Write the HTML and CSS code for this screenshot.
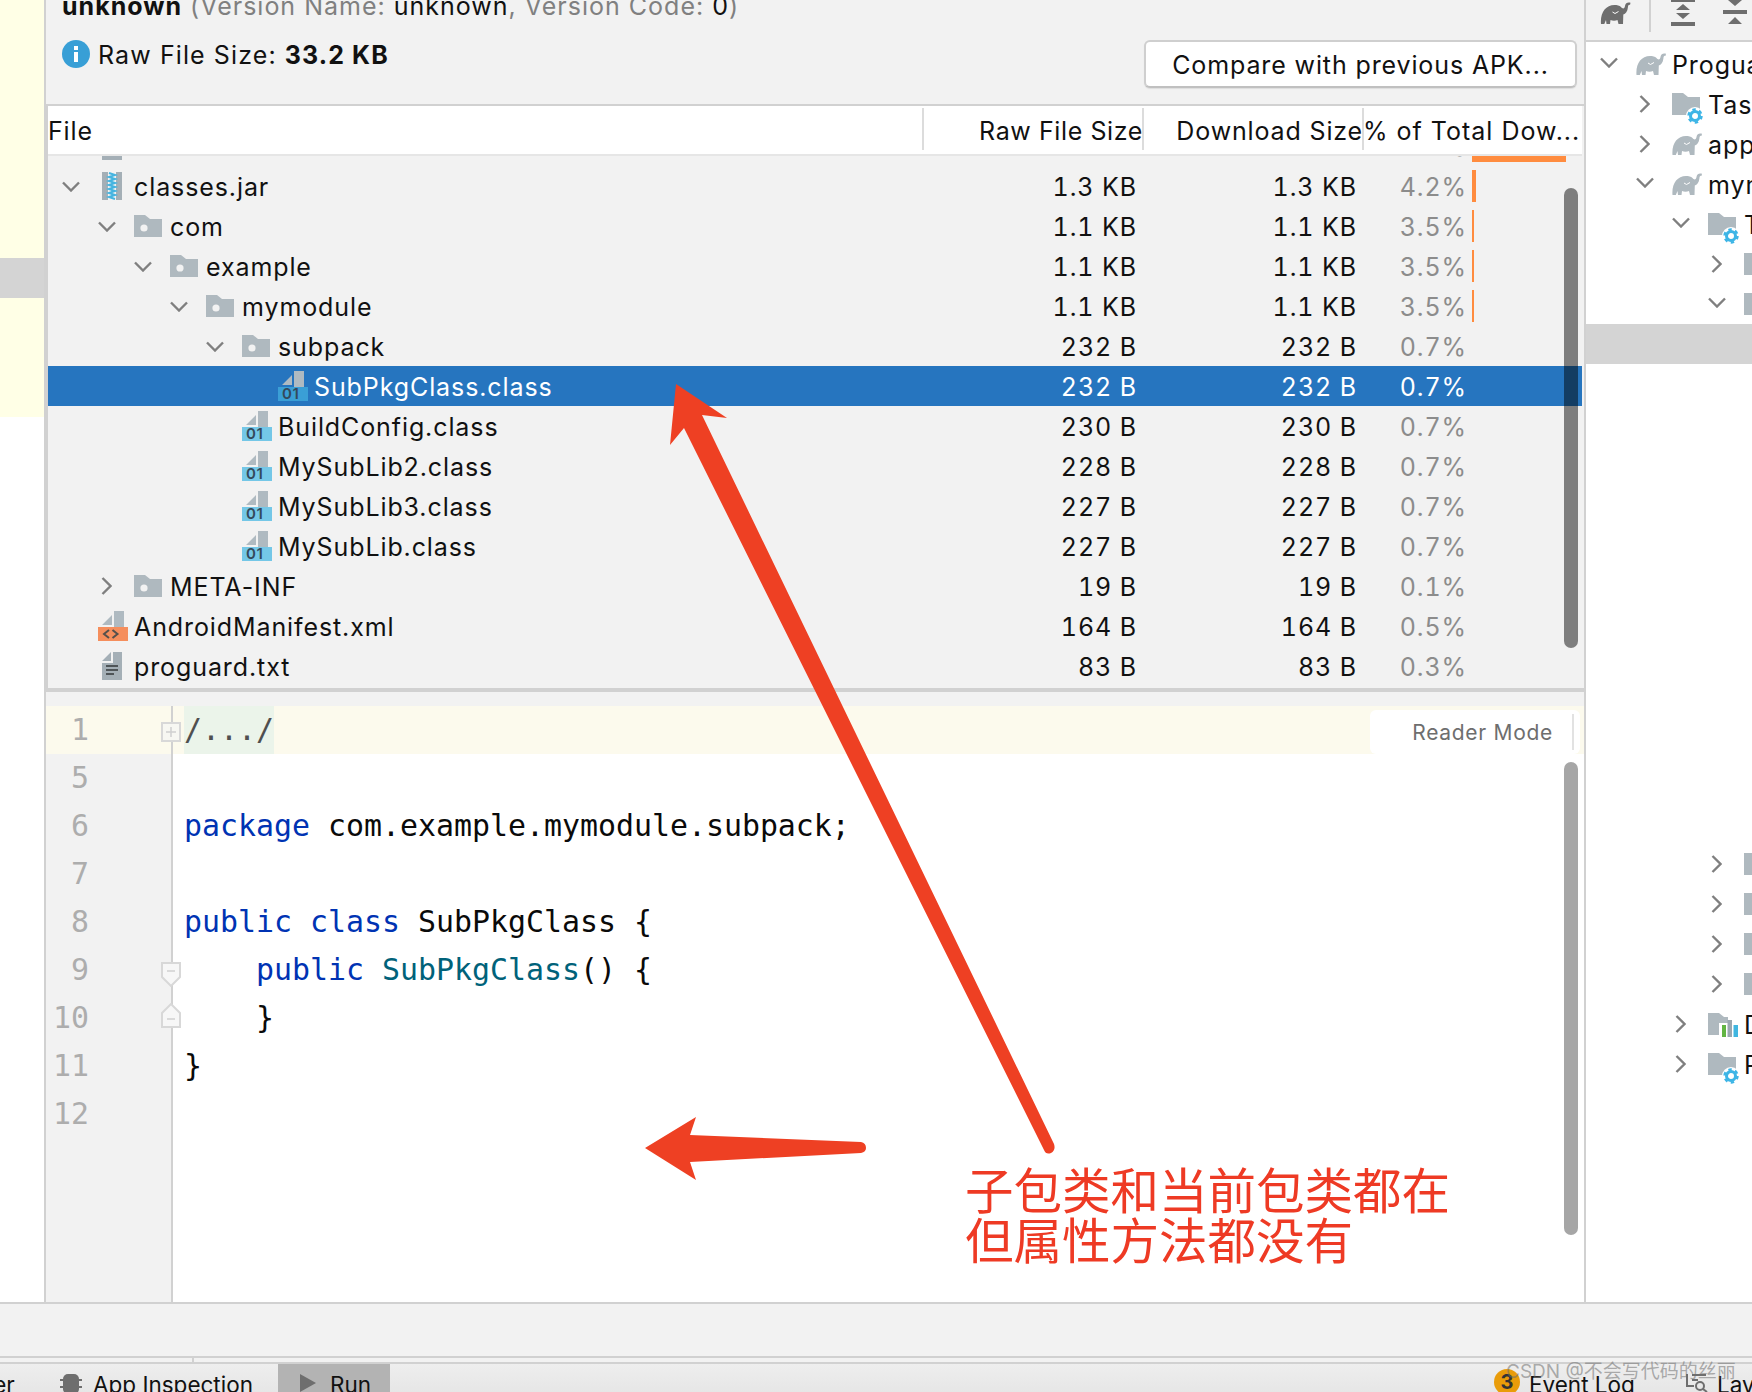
FILE: index.html
```html
<!DOCTYPE html>
<html lang="en">
<head>
<meta charset="utf-8">
<title>APK Analyzer</title>
<link rel="stylesheet" href="styles.css">
</head>
<body>
<svg class="defs" width="0" height="0" aria-hidden="true">
  <symbol id="i-down" viewBox="0 0 18 11"><path d="M1 1.5 9 9.5 17 1.5" fill="none" stroke="currentColor" stroke-width="2.4"/></symbol>
  <symbol id="i-right" viewBox="0 0 11 18"><path d="M1.5 1 9.5 9 1.5 17" fill="none" stroke="currentColor" stroke-width="2.4"/></symbol>
  <symbol id="i-folder" viewBox="0 0 28 22"><path d="M0 0H11L16 4H28V22H0Z" fill="#afb9bf"/><circle cx="10" cy="13" r="3.6" fill="#f2f2f2"/></symbol>
  <symbol id="i-folder-plain" viewBox="0 0 28 22"><path d="M0 0H11L16 4H28V22H0Z" fill="#afb9bf"/></symbol>
  <symbol id="i-jar" viewBox="0 0 20 28"><rect width="20" height="28" fill="#a4afb6"/><rect x="6" width="8" height="28" fill="#f2f2f2"/><path d="M7 1 13 3 7 5 13 7 7 9 13 11 7 13 13 15 7 17 13 19 7 21 13 23 7 25 13 27" fill="none" stroke="#45b4e0" stroke-width="2"/></symbol>
  <symbol id="i-class" viewBox="0 0 30 30"><path d="M4 14 14 4V14ZM16 0H26V16H4V16H16Z" fill="#afbac1"/><rect y="16" width="30" height="14" fill="var(--band,#74c7e7)"/><text x="4" y="27.500" class="bin">01</text></symbol>
  <symbol id="i-xml" viewBox="0 0 30 30"><path d="M4 14 14 4V14ZM16 0H26V16H4V16H16Z" fill="#afbac1"/><rect y="16" width="30" height="14" fill="#f58e5c"/><path d="M11 19 6 23 11 27M14.500 19 19.500 23 14.500 27" fill="none" stroke="#55504c" stroke-width="2"/></symbol>
  <symbol id="i-txt" viewBox="0 0 20 28"><path d="M0 9 9 0V9ZM11 0H20V28H0V11H11Z" fill="#a4afb6"/><path d="M4 14H16M4 18H16M4 22H12" stroke="#4f5558" stroke-width="2"/></symbol>
  <symbol id="i-gradle" viewBox="0 0 30 22"><path d="M0.500 22C-0.500 11 5 3 14 3 16.500 3 19 3.500 20.500 5 22.500 7.500 24.200 6.500 24.600 3.500 25 1 27.500-0.300 30 0.800L29.500 3C28 2.500 27.600 3.500 27.400 5.500 27 9.500 25 12 22.800 12.500L22.500 22H18L17 18C15 19 12 19 10 18L9.500 22H6L5.500 18 3.800 22Z" fill="currentColor"/><path d="M12 10 14.500 11.500 18 9.500" fill="none" stroke="#fff" stroke-width="1"/></symbol>
  <symbol id="i-gear" viewBox="0 0 18 18"><circle cx="9" cy="9" r="9" fill="#fff"/><circle cx="9" cy="9" r="4.500" fill="none" stroke="#3db5e6" stroke-width="3"/><circle cx="9" cy="9" r="6.500" fill="none" stroke="#3db5e6" stroke-width="2.400" stroke-dasharray="3.400 3.400"/></symbol>
  <symbol id="i-chart" viewBox="0 0 30 24"><path d="M0 0H11L16 4H28V22H0Z" fill="#afb9bf"/><path d="M11 24V10H20V4H30V24Z" fill="#fff"/><rect x="14" y="12" width="4" height="12" fill="#62b543"/><rect x="19.500" y="7" width="4.500" height="17" fill="#9aa7b0"/><rect x="25.500" y="12" width="4.500" height="12" fill="#40b6e0"/></symbol>
</svg>

<div class="app">
  <div class="workspace">
    <aside class="strip">
      <div class="strip-y1"></div>
      <div class="strip-sel"></div>
      <div class="strip-y2"></div>
    </aside>

    <main class="center">
      <header class="apk-head">
        <div class="apk-title"><b>unknown</b> <span class="dim">(Version Name:</span> unknown<span class="dim">,</span> <span class="dim">Version Code:</span> 0<span class="dim">)</span></div>
        <div class="apk-info">
          <div class="apk-size">
            <svg class="info" viewBox="0 0 28 28"><ellipse cx="14" cy="14" rx="14" ry="14" fill="#389fd6"/><rect x="12" y="12" width="4" height="10" fill="#fff"/><rect x="12" y="6" width="4" height="4" fill="#fff"/></svg>
            <span class="apk-size-text">Raw File Size: <b>33.2 KB</b></span>
          </div>
          <button class="compare">Compare with previous APK...</button>
        </div>
      </header>

      <section class="table">
        <div class="thead">
          <div class="th th-file">File</div>
          <div class="th th-num th-raw">Raw File Size</div>
          <div class="th th-num">Download Size</div>
          <div class="th th-pct">% of Total Dow...</div>
        </div>
        <div class="tbody">
          <div class="row row-clipped">
            <div class="name d0"><span class="chev"></span><span class="ico"><svg class="jar"><use href="#i-txt"/></svg></span></div>
            <div class="num">33.2 KB</div><div class="num">31 KB</div><div class="pct">100%</div><div class="barcell"><i class="bar bar-full"></i></div>
          </div>
          <div class="row">
            <div class="name d0"><span class="chev"><svg class="cd"><use href="#i-down"/></svg></span><span class="ico"><svg class="jar"><use href="#i-jar"/></svg></span>classes.jar</div>
            <div class="num">1.3 KB</div><div class="num">1.3 KB</div><div class="pct">4.2%</div><div class="barcell"><i class="bar bar-w4"></i></div>
          </div>
          <div class="row">
            <div class="name d1"><span class="chev"><svg class="cd"><use href="#i-down"/></svg></span><span class="ico"><svg class="folder"><use href="#i-folder"/></svg></span>com</div>
            <div class="num">1.1 KB</div><div class="num">1.1 KB</div><div class="pct">3.5%</div><div class="barcell"><i class="bar bar-w3"></i></div>
          </div>
          <div class="row">
            <div class="name d2"><span class="chev"><svg class="cd"><use href="#i-down"/></svg></span><span class="ico"><svg class="folder"><use href="#i-folder"/></svg></span>example</div>
            <div class="num">1.1 KB</div><div class="num">1.1 KB</div><div class="pct">3.5%</div><div class="barcell"><i class="bar bar-w3"></i></div>
          </div>
          <div class="row">
            <div class="name d3"><span class="chev"><svg class="cd"><use href="#i-down"/></svg></span><span class="ico"><svg class="folder"><use href="#i-folder"/></svg></span>mymodule</div>
            <div class="num">1.1 KB</div><div class="num">1.1 KB</div><div class="pct">3.5%</div><div class="barcell"><i class="bar bar-w3"></i></div>
          </div>
          <div class="row">
            <div class="name d4"><span class="chev"><svg class="cd"><use href="#i-down"/></svg></span><span class="ico"><svg class="folder"><use href="#i-folder"/></svg></span>subpack</div>
            <div class="num">232 B</div><div class="num">232 B</div><div class="pct">0.7%</div><div class="barcell"></div>
          </div>
          <div class="row selected">
            <div class="name d5"><span class="chev"></span><span class="ico"><svg class="cls"><use href="#i-class"/></svg></span>SubPkgClass.class</div>
            <div class="num">232 B</div><div class="num">232 B</div><div class="pct">0.7%</div><div class="barcell"></div>
          </div>
          <div class="row">
            <div class="name d4"><span class="chev"></span><span class="ico"><svg class="cls"><use href="#i-class"/></svg></span>BuildConfig.class</div>
            <div class="num">230 B</div><div class="num">230 B</div><div class="pct">0.7%</div><div class="barcell"></div>
          </div>
          <div class="row">
            <div class="name d4"><span class="chev"></span><span class="ico"><svg class="cls"><use href="#i-class"/></svg></span>MySubLib2.class</div>
            <div class="num">228 B</div><div class="num">228 B</div><div class="pct">0.7%</div><div class="barcell"></div>
          </div>
          <div class="row">
            <div class="name d4"><span class="chev"></span><span class="ico"><svg class="cls"><use href="#i-class"/></svg></span>MySubLib3.class</div>
            <div class="num">227 B</div><div class="num">227 B</div><div class="pct">0.7%</div><div class="barcell"></div>
          </div>
          <div class="row">
            <div class="name d4"><span class="chev"></span><span class="ico"><svg class="cls"><use href="#i-class"/></svg></span>MySubLib.class</div>
            <div class="num">227 B</div><div class="num">227 B</div><div class="pct">0.7%</div><div class="barcell"></div>
          </div>
          <div class="row">
            <div class="name d1"><span class="chev"><svg class="cr"><use href="#i-right"/></svg></span><span class="ico"><svg class="folder"><use href="#i-folder"/></svg></span>META-INF</div>
            <div class="num">19 B</div><div class="num">19 B</div><div class="pct">0.1%</div><div class="barcell"></div>
          </div>
          <div class="row">
            <div class="name d0"><span class="chev"></span><span class="ico"><svg class="cls"><use href="#i-xml"/></svg></span>AndroidManifest.xml</div>
            <div class="num">164 B</div><div class="num">164 B</div><div class="pct">0.5%</div><div class="barcell"></div>
          </div>
          <div class="row">
            <div class="name d0"><span class="chev"></span><span class="ico"><svg class="jar"><use href="#i-txt"/></svg></span>proguard.txt</div>
            <div class="num">83 B</div><div class="num">83 B</div><div class="pct">0.3%</div><div class="barcell"></div>
          </div>
          <div class="thumb thumb-table"></div>
        </div>
      </section>

      <section class="editor">
        <div class="editor-top"></div>
        <div class="editor-body">
          <div class="gutter">
            <div class="gl caret">1<svg class="fold fold-box" viewBox="0 0 20 20"><rect x="1" y="1" width="18" height="18" fill="#f7f7f2" stroke="#d8d8d8" stroke-width="2"/><path d="M5 10H15M10 5V15" stroke="#d0d0d0" stroke-width="1.500"/></svg></div>
            <div class="gl">5</div>
            <div class="gl">6</div>
            <div class="gl">7</div>
            <div class="gl">8</div>
            <div class="gl">9<svg class="fold fold-start" viewBox="0 0 20 25"><path d="M1 1H19V15L10 24 1 15Z" fill="#f7f7f7" stroke="#d8d8d8" stroke-width="2"/><path d="M6 9H14" stroke="#d0d0d0" stroke-width="1.500"/></svg></div>
            <div class="gl">10<svg class="fold fold-end" viewBox="0 0 20 25"><path d="M1 24H19V10L10 1 1 10Z" fill="#f7f7f7" stroke="#d8d8d8" stroke-width="2"/><path d="M6 16H14" stroke="#d0d0d0" stroke-width="1.500"/></svg></div>
            <div class="gl">11</div>
            <div class="gl">12</div>
          </div>
          <div class="code">
            <div class="cl caret"><span class="folded">/.../</span></div>
            <div class="cl"></div>
            <div class="cl"><span class="kw">package</span> com.example.mymodule.subpack;</div>
            <div class="cl"></div>
            <div class="cl"><span class="kw">public class</span> SubPkgClass {</div>
            <div class="cl">    <span class="kw">public</span> <span class="fn">SubPkgClass</span>() {</div>
            <div class="cl">    }</div>
            <div class="cl">}</div>
            <div class="cl"></div>
          </div>
        </div>
        <div class="reader"><span>Reader Mode</span><i class="reader-sep"></i></div>
        <div class="thumb thumb-editor"></div>
      </section>
    </main>

    <aside class="gradle">
      <div class="g-tools">
        <svg class="g-elephant"><use href="#i-gradle"/></svg>
        <i class="g-sep"></i>
        <svg class="g-tool g-expand" viewBox="0 0 24 26"><path d="M0 0H24V2H0ZM0 22H24V26H0ZM12 4 19 10H5ZM5 13H19L12 19Z" fill="#6e6e6e"/></svg>
        <svg class="g-tool g-collapse" viewBox="0 0 24 26"><path d="M5 0H19L12 6ZM0 10H24V14H0ZM12 17 19 24H5Z" fill="#6e6e6e"/></svg>
      </div>
      <div class="g-tree">
        <div class="g-row d0"><span class="chev"><svg class="cd"><use href="#i-down"/></svg></span><span class="ico"><svg class="g-gradle"><use href="#i-gradle"/></svg></span>ProguardDemo</div>
        <div class="g-row d1"><span class="chev"><svg class="cr"><use href="#i-right"/></svg></span><span class="ico"><span class="stack"><svg class="folder"><use href="#i-folder-plain"/></svg><svg class="gear"><use href="#i-gear"/></svg></span></span>Tasks</div>
        <div class="g-row d1"><span class="chev"><svg class="cr"><use href="#i-right"/></svg></span><span class="ico"><svg class="g-gradle"><use href="#i-gradle"/></svg></span>app</div>
        <div class="g-row d1"><span class="chev"><svg class="cd"><use href="#i-down"/></svg></span><span class="ico"><svg class="g-gradle"><use href="#i-gradle"/></svg></span>mymodule</div>
        <div class="g-row d2"><span class="chev"><svg class="cd"><use href="#i-down"/></svg></span><span class="ico"><span class="stack"><svg class="folder"><use href="#i-folder-plain"/></svg><svg class="gear"><use href="#i-gear"/></svg></span></span>Tasks</div>
        <div class="g-row d3"><span class="chev"><svg class="cr"><use href="#i-right"/></svg></span><span class="ico"><svg class="folder"><use href="#i-folder-plain"/></svg></span></div>
        <div class="g-row d3"><span class="chev"><svg class="cd"><use href="#i-down"/></svg></span><span class="ico"><svg class="folder"><use href="#i-folder-plain"/></svg></span></div>
        <div class="g-row g-sel"></div>
        <div class="g-space"></div>
        <div class="g-row d3"><span class="chev"><svg class="cr"><use href="#i-right"/></svg></span><span class="ico"><svg class="folder"><use href="#i-folder-plain"/></svg></span></div>
        <div class="g-row d3"><span class="chev"><svg class="cr"><use href="#i-right"/></svg></span><span class="ico"><svg class="folder"><use href="#i-folder-plain"/></svg></span></div>
        <div class="g-row d3"><span class="chev"><svg class="cr"><use href="#i-right"/></svg></span><span class="ico"><svg class="folder"><use href="#i-folder-plain"/></svg></span></div>
        <div class="g-row d3"><span class="chev"><svg class="cr"><use href="#i-right"/></svg></span><span class="ico"><svg class="folder"><use href="#i-folder-plain"/></svg></span></div>
        <div class="g-row d2"><span class="chev"><svg class="cr"><use href="#i-right"/></svg></span><span class="ico"><svg class="chart"><use href="#i-chart"/></svg></span>Dependencies</div>
        <div class="g-row d2"><span class="chev"><svg class="cr"><use href="#i-right"/></svg></span><span class="ico"><span class="stack"><svg class="folder"><use href="#i-folder-plain"/></svg><svg class="gear"><use href="#i-gear"/></svg></span></span>Run Configurations</div>
      </div>
    </aside>
  </div>

  <div class="status-area"></div>
  <div class="status-gap"><i class="tick"></i></div>
  <footer class="toolbar">
    <div class="tool tool-profiler">Profiler</div>
    <div class="tool tool-inspect">
      <svg class="t-bug" viewBox="0 0 22 20"><rect x="3" y="0" width="16" height="20" rx="5" fill="#6e6e6e"/><path d="M0 6H3M19 6H22M0 13H3M19 13H22" stroke="#6e6e6e" stroke-width="2"/></svg>
      App Inspection
    </div>
    <div class="tool tool-run">
      <svg class="t-play" viewBox="0 0 16 18"><path d="M0 0 16 9 0 18Z" fill="#6e6e6e"/></svg>
      Run
    </div>
    <div class="tool tool-log"><span class="badge">3</span>Event Log</div>
    <div class="tool tool-layout">
      <svg class="t-layout" viewBox="0 0 22 20"><path d="M1 2V14H8M6 3H20M6 8H12" fill="none" stroke="#6e6e6e" stroke-width="2"/><circle cx="14" cy="14" r="4" fill="none" stroke="#6e6e6e" stroke-width="2"/><path d="M17 17 21 20" stroke="#6e6e6e" stroke-width="2"/></svg>
      Layout Inspector
    </div>
  </footer>

  <svg class="annot" viewBox="0 0 1752 1392" aria-hidden="true">
    <path d="M676 384 727 418 702 415 1054 1144Q1056 1150 1051 1153 1046 1155 1044 1150L684 428 670 445Z" fill="#ee4023"/>
    <path d="M645 1148 696 1117 690 1135 861 1142Q866 1143 866 1148 866 1152 861 1153L690 1162 696 1180Z" fill="#ee4023"/>
  </svg>
  <div class="note">子包类和当前包类都在<br>但属性方法都没有</div>
  <div class="watermark">CSDN @不会写代码的丝丽</div>
</div>
</body>
</html>
```

FILE: styles.css
```css
* { box-sizing: border-box; }
html, body { margin: 0; padding: 0; }
body {
  width: 1752px;
  height: 1392px;
  overflow: hidden;
  background: #fff;
  font-family: Inter, "Noto Sans", "Liberation Sans", sans-serif;
  font-size: 25px;
  color: #111;
}
.defs { position: absolute; }
.bin { font: 600 15px Inter, sans-serif; letter-spacing: .5px; fill: #33495c; }

.app { position: relative; width: 1752px; height: 1392px; overflow: hidden; }
.workspace { display: flex; height: 1304px; border-bottom: 2px solid #d1d1d1; }

/* left strip */
.strip { flex: 0 0 46px; border-right: 2px solid #d1d1d1; background: #fff; }
.strip-y1 { height: 258px; background: #ffffe6; }
.strip-sel { height: 40px; background: #d4d4d4; }
.strip-y2 { height: 119px; background: #ffffe6; }

/* centre */
.center { flex: 0 0 1540px; display: flex; flex-direction: column; background: #f2f2f2; border-right: 2px solid #d1d1d1; }
.apk-head { height: 104px; padding-left: 16px; padding-right: 7px; overflow: hidden; }
.apk-title { margin-top: -13px; line-height: 38px; white-space: nowrap; letter-spacing: 1px; }
.dim { color: #808080; }
.apk-info { display: flex; justify-content: space-between; align-items: flex-start; margin-top: 15px; }
.apk-size { display: flex; align-items: center; gap: 8px; height: 28px; }
.apk-size-text { padding-top: 2px; letter-spacing: 1.1px; }
.info { width: 28px; height: 28px; flex: none; }
.compare {
  width: 433px;
  height: 48px;
  margin-top: 0;
  background: #fff;
  border: 2px solid #cfcfcf;
  border-bottom-color: #c0c0c0;
  border-radius: 6px;
  box-shadow: 0 1px 1px #ddd;
  font: inherit;
  letter-spacing: .88px;
  color: #111;
  padding: 2px 0 0;
}

/* table */
.table { height: 588px; border-top: 2px solid #d1d1d1; border-bottom: 4px solid #d1d1d1; display: flex; flex-direction: column; padding-left: 2px; padding-right: 2px; background: linear-gradient(#d1d1d1, #d1d1d1) left / 2px 100% no-repeat; }
.thead { display: flex; height: 50px; flex: none; background: #fff; border-bottom: 2px solid #e6e6e6; line-height: 50px; white-space: nowrap; letter-spacing: .85px; }
.th { position: relative; }
.th-file { width: 875px; }
.th-num { width: 220px; text-align: right; }
.th-raw { letter-spacing: .6px; }
.th-pct { flex: 1; letter-spacing: 1px; }
.th-file::after, .th-num::after { content: ""; position: absolute; right: -1px; top: 2px; bottom: 4px; width: 2px; background: #dcdcdc; }
.tbody { position: relative; flex: 1; overflow: hidden; }
.row { display: flex; height: 40px; line-height: 42px; white-space: nowrap; letter-spacing: .9px; }
.row-clipped { margin-top: -30px; }
.row.selected { background: #2675bf; color: #fff; --band: #3a9fd6; }
.name { width: 875px; display: flex; align-items: flex-start; }
.d0 { padding-left: 14px; }
.d1 { padding-left: 50px; }
.d2 { padding-left: 86px; }
.d3 { padding-left: 122px; }
.d4 { padding-left: 158px; }
.d5 { padding-left: 194px; }
.chev { flex: 0 0 36px; display: flex; align-items: center; color: #7f7f7f; height: 40px; }
.cd { width: 18px; height: 11px; }
.cr { width: 11px; height: 18px; margin-left: 3px; }
.ico { flex: 0 0 36px; display: flex; align-items: center; height: 40px; }
.folder { display: block; width: 28px; height: 22px; }
.jar { width: 20px; height: 28px; margin-left: 4px; }
.cls { width: 30px; height: 30px; }
.num { width: 220px; text-align: right; padding-right: 6px; font-variant-numeric: tabular-nums; }
.pct { width: 104px; text-align: right; color: #8c8c8c; font-variant-numeric: tabular-nums; }
.selected .pct { color: #fff; }
.barcell { flex: 1; padding-left: 5px; display: flex; align-items: center; }
.bar { display: block; height: 32px; background: #ff8c3f; }
.bar-full { width: 94px; }
.bar-w4 { width: 4px; }
.bar-w3 { width: 2px; }
.thumb { position: absolute; border-radius: 7px; width: 14px; }
.thumb-table { left: 1516px; top: 32px; height: 460px; background: rgba(0, 0, 0, .48); }

/* editor */
.editor { position: relative; flex: 1; background: #fff; display: flex; flex-direction: column; min-height: 0; }
.editor-top { height: 14px; background: #f2f2f2; flex: none; }
.editor-body { flex: 1; display: flex; min-height: 0; font-family: "DejaVu Sans Mono", "Liberation Mono", monospace; font-size: 29.9px; }
.gutter { flex: 0 0 127px; background: #f2f2f2; border-right: 2px solid #d1d1d1; color: #adadad; }
.gl { position: relative; height: 48px; line-height: 48px; padding-right: 82px; text-align: right; }
.gl.caret { background: #fcfaed; }
.fold { position: absolute; left: 115px; }
.fold-box { top: 16px; width: 20px; height: 20px; }
.fold-start { top: 16px; width: 20px; height: 25px; }
.fold-end { top: 9px; width: 20px; height: 25px; }
.code { flex: 1; }
.cl { height: 48px; line-height: 48px; padding-left: 11px; white-space: pre; color: #0a0a0a; }
.cl.caret { background: #fcfaed; }
.folded { display: inline-block; height: 48px; background: #ebf4ea; color: #4f4f4f; }
.kw { color: #0033b3; }
.fn { color: #00627a; }
.reader { position: absolute; top: 18px; right: 4px; width: 210px; height: 44px; border-radius: 6px; background: #fff; color: #6e6e6e; font-family: Inter, sans-serif; font-size: 21px; letter-spacing: .7px; display: flex; align-items: center; justify-content: flex-end; padding-right: 6px; gap: 19px; }
.reader-sep { width: 2px; height: 36px; background: #e2e2e2; }
.thumb-editor { left: 1518px; top: 70px; height: 473px; background: #a6a6a6; }

/* gradle panel */
.gradle { flex: 1; min-width: 0; overflow: hidden; background: #fff; white-space: nowrap; }
.g-tools { height: 42px; background: #f2f2f2; border-bottom: 2px solid #d1d1d1; display: flex; align-items: flex-start; padding-left: 14px; }
.g-elephant { width: 31px; height: 22px; margin-top: 2px; color: #6e6e6e; flex: none; }
.g-sep { width: 2px; height: 32px; background: #d1d1d1; margin-left: 18px; flex: none; }
.g-tool { width: 24px; height: 26px; flex: none; }
.g-expand { margin-left: 20px; }
.g-collapse { margin-left: 28px; }
.g-tree { padding-top: 2px; letter-spacing: .9px; }
.g-row { height: 40px; line-height: 42px; display: flex; align-items: flex-start; }
.g-row .cd { margin-bottom: 4px; }
.g-gradle { width: 30px; height: 22px; color: #afb9bf; }
.g-sel { background: #d4d4d4; }
.g-space { height: 480px; }
.stack { position: relative; display: block; width: 28px; height: 22px; }
.gear { position: absolute; left: 14px; top: 14px; width: 18px; height: 18px; }
.chart { display: block; width: 30px; height: 24px; margin-top: 2px; }

/* status + toolbar */
.status-area { height: 54px; background: #f2f2f2; border-bottom: 2px solid #d1d1d1; }
.status-gap { position: relative; height: 6px; background: #f2f2f2; border-bottom: 2px solid #d1d1d1; }
.tick { position: absolute; left: 192px; top: 0; width: 2px; height: 4px; background: #d1d1d1; }
.toolbar { position: relative; display: flex; height: 28px; background: linear-gradient(#eeeeee, #e6e6e6); font-size: 22.500px; line-height: 42px; white-space: nowrap; overflow: hidden; }
.tool { display: flex; align-items: flex-start; flex: none; }
.tool-profiler { margin-left: -62px; width: 122px; }
.tool-inspect { width: 218px; gap: 11px; }
.t-bug { width: 22px; height: 20px; margin-top: 10px; }
.tool-run { width: 112px; background: #b3b3b3; padding-left: 22px; gap: 14px; }
.t-play { width: 16px; height: 18px; margin-top: 10px; }
.tool-log { position: absolute; left: 1494px; gap: 9px; }
.badge { width: 26px; height: 26px; margin-top: 5px; border-radius: 50%; background: #e99c09; color: #333; font-weight: 700; font-size: 20px; line-height: 27px; text-align: center; }
.tool-layout { position: absolute; left: 1686px; gap: 9px; }
.t-layout { width: 22px; height: 20px; margin-top: 8px; }

/* annotations */
.annot { position: absolute; left: 0; top: 0; width: 1752px; height: 1392px; pointer-events: none; }
.note { position: absolute; left: 965px; top: 1163px; font-family: "Noto Sans CJK SC", sans-serif; font-weight: 400; font-size: 48.500px; line-height: 50px; color: #ee3a24; white-space: nowrap; }
.watermark { position: absolute; left: 1506px; top: 1358px; font-family: Inter, "Noto Sans CJK SC", sans-serif; font-size: 19px; line-height: 28px; color: rgba(110, 110, 110, .55); white-space: nowrap; }
```
